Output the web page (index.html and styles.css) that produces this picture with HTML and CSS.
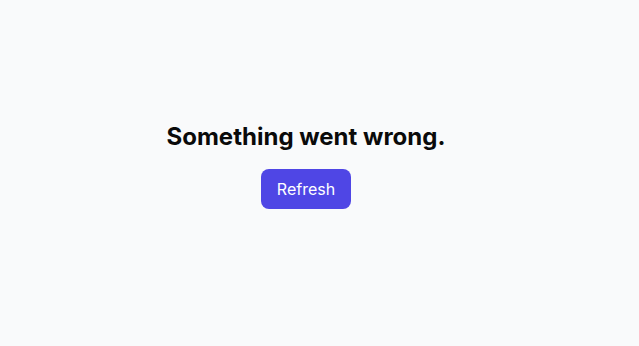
FILE: index.html
```html
<!DOCTYPE html>
<html lang="en">
<head>
<meta charset="utf-8">
<title>Error</title>
<link rel="stylesheet" href="styles.css">
</head>
<body>
<main class="page">
  <div class="error">
    <h1 class="error-title">Something went wrong.</h1>
    <button class="btn-refresh" type="button">Refresh</button>
  </div>
</main>
</body>
</html>
```

FILE: styles.css
```css
* { box-sizing: border-box; }
html, body { margin: 0; padding: 0; }
body {
  background: #f9fafb;
  font-family: Inter, "Noto Sans", "Liberation Sans", sans-serif;
  color: #111111;
}
.page {
  min-height: 100vh;
  display: flex;
  align-items: center;
  justify-content: center;
  padding: 0 27px 16px 0;
}
.error {
  display: flex;
  flex-direction: column;
  align-items: center;
  gap: 16px;
}
.error-title {
  margin: 0;
  font-size: 24px;
  line-height: 32px;
  font-weight: 700;
  color: #0a0a0a;
}
.btn-refresh {
  font-family: inherit;
  font-size: 16px;
  line-height: 24px;
  padding: 8px 16px;
  border: 0;
  border-radius: 8px;
  background: #4f46e5;
  color: #ffffff;
  cursor: pointer;
}
```
